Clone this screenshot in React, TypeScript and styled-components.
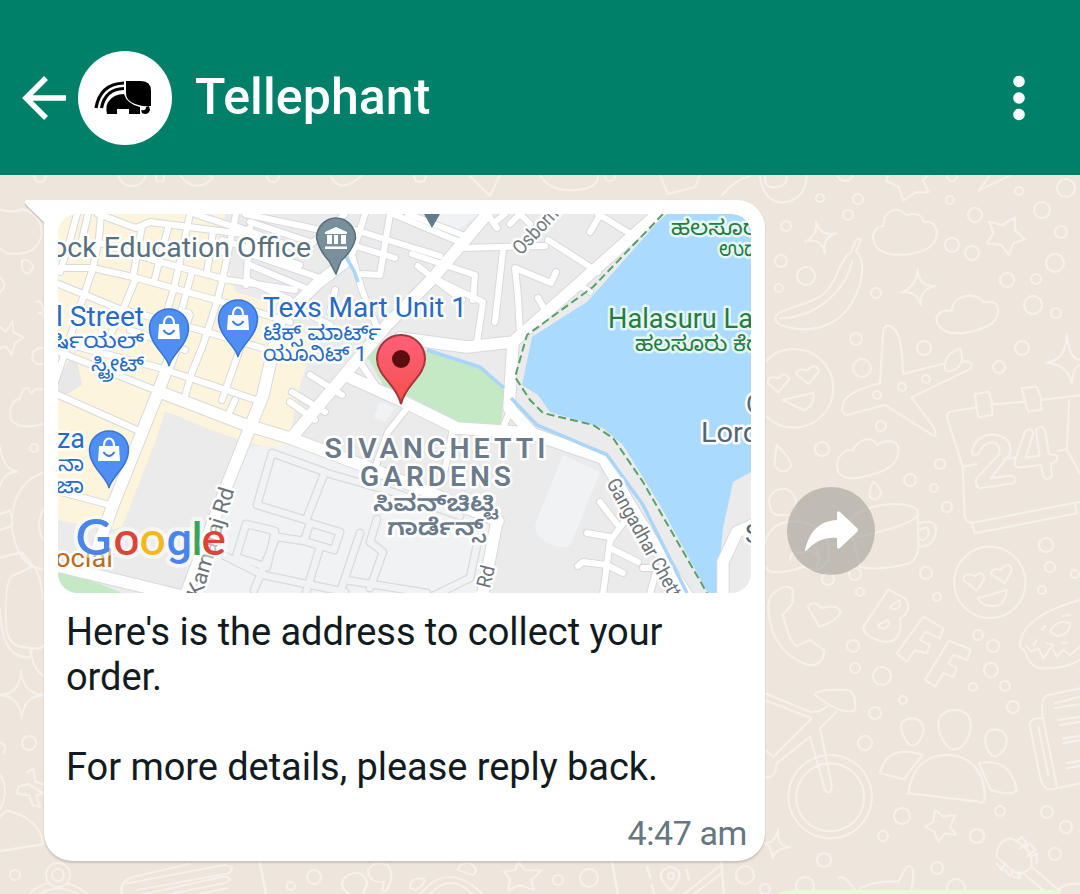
import React from 'react';
import styled, { createGlobalStyle } from 'styled-components';

const Global = createGlobalStyle`
  * { box-sizing: border-box; }
  body { margin: 0; background: #eee6dd; font-family: Roboto, "Noto Sans", sans-serif; overflow: hidden; }
`;

const Screen = styled.div`
  width: 1080px; height: 894px; display: flex; flex-direction: column; overflow: hidden;
`;
const Header = styled.header`
  flex: none; height: 175px; padding: 21px 41px 0 22px; background: #018069; color: #fff;
  display: flex; align-items: center;
`;
const Avatar = styled.div`
  width: 94px; height: 94px; margin-left: 12px; padding-right: 5px; border-radius: 50%; background: #fff;
  display: flex; align-items: center; justify-content: center;
`;
const Title = styled.h1`
  margin: 0 0 3px 23px; flex: 1; font-size: 50px; font-weight: 500; line-height: 60px; letter-spacing: 0.1px;
`;
const MenuButton = styled.button`
  border: 0; padding: 0; width: 44px; height: 50px; margin-right: -2px; background: none; color: #fff;
  display: flex; align-items: center; justify-content: center;
`;
const Chat = styled.main`
  flex: 1; position: relative; display: flex; flex-direction: column; justify-content: space-between;
  padding: 25px 0 0 44px;
`;
const Wallpaper = styled.svg`
  position: absolute; left: 0; top: 0; fill: none; stroke: #f6f1eb; stroke-linejoin: round; stroke-linecap: round;
`;
const MessageRow = styled.div`
  position: relative; display: flex; align-items: center; gap: 22px;
`;
const Bubble = styled.article`
  position: relative; width: 721px; height: 661px; padding: 14px; border-radius: 0 28px 28px 28px;
  background: #fff; box-shadow: 0 1.5px 2px rgba(60, 50, 40, .2); display: flex; flex-direction: column;
`;
const Tail = styled.svg`
  position: absolute; left: -20px; top: 0;
`;
const MapView = styled.svg`
  flex: none; border-radius: 20px; display: block;
`;
const Message = styled.p`
  margin: 17px 0 0 8px; font-size: 38px; line-height: 45px; color: #111b21; white-space: pre-line; letter-spacing: -0.05px;
`;
const Time = styled.time`
  align-self: flex-end; margin: 23px 4px 0 0; font-size: 34px; line-height: 40px; color: #667781; letter-spacing: -.4px;
`;
const Forward = styled.button`
  border: 0; padding: 0; width: 88px; height: 88px; border-radius: 50%; background: rgba(150, 150, 142, .52);
  display: flex; align-items: center; justify-content: center;
`;
const NextBubble = styled.div`
  position: relative; width: 280px; height: 4px; margin-left: 735px; border-radius: 18px 8px 0 0 / 4px 4px 0 0; background: #e4fdd5;
`;

const minor = [
  'M77 214L70 240L60 272', 'M88 214L82 240', 'M101 214L99 238L93 268L83 298L66 350L54 385',
  'M136 278L122 312L105 345', 'M142 226L133 277', 'M190 214L182 252L174 288L165 318', 'M192 272L183 305L170 345', 'M168 228L155 278',
  'M236 214L223 277L217 302L203 345L192 372L183 403', 'M213 232L207 272', 'M250 228L246 285', 'M243 340L222 400', 'M235 400L226 420',
  'M98 214L136 228L150 222L243 234', 'M195 214L243 230', 'M235 226L300 250', 'M222 240L300 265',
  'M54 268L93 268L133 277L223 302L290 322', 'M100 243L160 262L228 280L295 290', 'M176 245L222 252',
  'M54 282L117 308L200 330L262 348', 'M54 340L90 350L160 368L262 402', 'M130 330L185 350', 'M54 393L137 430', 'M54 350L160 392', 'M54 490L110 505',
  'M252 235L300 248', 'M253 255L320 278', 'M250 265L305 288', 'M248 280L290 300', 'M245 214L330 232', 'M250 222L310 242',
  'M345 214L310 245', 'M365 214L352 255L362 290L378 330', 'M390 214L380 275L362 274', 'M352 245L395 258', 'M355 230L440 256', 'M393 214L460 242',
  'M408 214L470 238', 'M412 254L475 275L473 300', 'M418 266L433 278L483 302L477 342', 'M433 278L462 300', 'M503 250L495 322', 'M460 248L545 246',
  'M495 222L505 214', 'M487 214L497 228', 'M510 224L520 214L530 224', 'M548 240L598 272', 'M598 214L634 236', 'M590 232L600 215', 'M576 283L590 292',
  'M556 272L551 283L515 268L518 296L520 335', 'M538 298L548 315', 'M310 375L342 395', 'M292 392L325 412', 'M290 402L315 420', 'M362 365L382 395',
  'M335 290L330 312', 'M300 310L330 325', 'M407 408L388 432L376 465', 'M453 428L444 474', 'M503 428L512 406',
  'M600 502L617 524', 'M587 533L610 537', 'M624 522L610 541L603 594', 'M610 548L638 562', 'M578 566L583 562L607 565L623 573', 'M643 568L657 568L650 594',
];
const major = [
  'M487 214L433 278L387 325L347 372L293 436', 'M345 262L318 283L280 320L263 395L227 485L185 597', 'M187 315L173 352L157 395L137 445L113 505L93 560',
  'M160 392L243 424L290 438L380 472L498 521', 'M400 338L467 347L513 342L662 210', 'M513 342L509 408L532 433',
  'M347 376L400 400L457 428L530 433L603 458L630 505L667 565L690 600', 'M497 521L482 598', 'M54 565L190 598', 'M755 524L737 532L723 562L723 600',
];
const inner = [
  'M272 453L325 472L306 520L257 505Z', 'M323 472L393 492L460 516', 'M310 523L340 532L334 550L304 541Z', 'M246 524L275 531L267 567L236 557Z',
  'M277 537L305 541', 'M225 556L263 575L345 592', 'M320 547L305 596', 'M360 533L339 596', 'M377 519L370 542L383 552L370 588', 'M345 580L427 593',
  'M477 545L470 578L433 596', 'M254 590L275 540',
];
type RoadsProps = { list: string[]; w: number; c: string };
const Roads = ({ list, w, c }: RoadsProps) => (
  <g fill="none" stroke={c} strokeWidth={w} strokeLinejoin="round" strokeLinecap="round">
    {list.map((d) => <path key={d} d={d} />)}
  </g>
);
const ShopPin = ({ x, y }: { x: number; y: number }) => (
  <g transform={`translate(${x} ${y})`}>
    <path d="M0 38C-2 27-19.5 17-19.5 0A19.5 19 0 0 1 19.5 0C19.5 17 2 27 0 38Z" fill="#4f8ef2" stroke="#3775d3" strokeWidth="1.5" />
    <path d="M-10-4H10L11 11H-11Z" fill="#fff" />
    <path d="M-5-3V-5A5 6.5 0 0 1 5-5V-3" fill="none" stroke="#fff" strokeWidth="2.2" />
    <path d="M-5.5 2Q0 10 5.5 2" fill="none" stroke="#3c7be0" strokeWidth="2" />
  </g>
);
type LabelProps = { x: number; y: number; size: number; w?: number; c: string; weight?: number; t?: string; halo?: string; spacing?: number; children: string };
const Label = ({ x, y, size, w, c, weight = 400, t, halo = '#fff', spacing, children }: LabelProps) => (
  <text x={x} y={y} fontSize={size} textLength={w} lengthAdjust="spacingAndGlyphs" letterSpacing={spacing} fill={c} fontWeight={weight} transform={t}
    stroke={halo} strokeWidth="5" strokeLinejoin="round" paintOrder="stroke">{children}</text>
);

const CityMap = () => (
  <MapView width="693" height="379" viewBox="58 214 693 379" fontFamily='Roboto, "Noto Sans Kannada", "Noto Sans", sans-serif'>
    <rect x="58" y="214" width="693" height="379" fill="#ebebeb" />
    <path d="M58 214H225L222 250L236 292L262 300L315 340L300 385L287 450L262 446L240 440L210 430L165 412L128 525L110 530L58 520Z" fill="#fdf4dc" />
    <path d="M58 380L75 350L82 385L58 400Z" fill="#e8e8e8" />
    <path d="M167 412L236 440L187 593H118L113 550Z" fill="#ebebeb" />
    <path d="M245 447L290 445L498 523L484 593H195Z" fill="#f0f2f4" />
    <path d="M563 455L600 472L572 542Q568 550 556 546Q535 540 535 525Z" fill="#f0f2f4" />
    <path d="M380 402L395 408L385 422L374 417Z" fill="#f0f2f4" />
    <path d="M430 214H480L450 236Z" fill="#f0f2f4" />
    <path d="M372 342L366 355L385 388L410 397L457 424L501 424L505 387L480 368L425 350Z" fill="#c5e8c5" />
    <path d="M58 570L100 584L122 593H58Z" fill="#c5e8c5" />
    <path d="M665 214L587 302L563 317L532 337L522 385L538 395L550 412L603 428L623 445L660 505L708 593H717L723 528L733 482L751 472V214Z" fill="#abdaff" />
    <Roads list={inner} w={9} c="#d8dade" /><Roads list={inner} w={6.5} c="#f0f2f4" />
    <Roads list={minor} w={8} c="#d7d9df" /><Roads list={major} w={13.5} c="#d7d9df" />
    <Roads list={minor} w={6} c="#fff" /><Roads list={major} w={11.5} c="#fff" />
    <g fill="none">
      <path d="M427 350L480 367L504 388M346 257L354 271L358 282M511 398L537 425L607 455L643 505L687 593" stroke="#a9d5fa" strokeWidth="3.5" />
      <path d="M663 214L593 287L527 335L515 377L530 400L543 413L593 425L613 438L643 482L707 593" stroke="#57a269" strokeWidth="2" strokeDasharray="8 4" />
    </g>
    <Label x={51} y={257} size={27} w={260} c="#58717f">ock Education Office</Label>
    <Label x={263} y={317} size={27} w={204} c="#276bc6">Texs Mart Unit 1</Label>
    <Label x={263} y={340} size={21} w={118} c="#276bc6">ಟೆಕ್ಸ್ ಮಾರ್ಟ್</Label>
    <Label x={263} y={361} size={21} w={104} c="#276bc6">ಯೂನಿಟ್ 1</Label>
    <Label x={56} y={326} size={27} w={88} c="#276bc6">l Street</Label>
    <Label x={49} y={348} size={21} w={95} c="#276bc6">ರ್ಷಿಯಲ್</Label>
    <Label x={91} y={371} size={21} w={53} c="#276bc6">ಸ್ಟ್ರೀಟ್</Label>
    <Label x={57} y={448} size={27} w={28} c="#276bc6">za</Label>
    <Label x={58} y={471} size={21} w={26} c="#276bc6">ನಾ</Label>
    <Label x={56} y={493} size={21} w={28} c="#276bc6">ಜಾ</Label>
    <Label x={671} y={235} size={21} w={96} c="#277b40" halo="#e4f7f5">ಹಲಸೂರು</Label>
    <Label x={719} y={256} size={21} w={70} c="#277b40" halo="#e4f7f5">ಉದ್ಯಾನ</Label>
    <Label x={608} y={328} size={28} w={173} c="#277b40" halo="#e4f7f5">Halasuru Lake</Label>
    <Label x={635} y={351} size={21} w={126} c="#277b40" halo="#e4f7f5">ಹಲಸೂರು ಕೆರೆ</Label>
    <Label x={701} y={442} size={27} w={58} c="#526773">Lord</Label>
    <Label x={746} y={413} size={26} c="#526773">O</Label>
    <Label x={745} y={543} size={26} c="#526773">S</Label>
    <Label x={324.500} y={458} size={28} w={225} c="#6a7b8c" weight={600} spacing={4}>SIVANCHETTI</Label>
    <Label x={360} y={486} size={28} w={155} c="#6a7b8c" weight={600} spacing={4}>GARDENS</Label>
    <Label x={373} y={511} size={23} w={125} c="#6a7b8c" weight={600}>ಸಿವನ್‌ಚಿಟ್ಟಿ</Label>
    <Label x={387} y={535} size={23} w={98} c="#6a7b8c" weight={600}>ಗಾರ್ಡೆನ್ಸ್</Label>
    <Label x={0} y={0} size={20} w={66} c="#74797e" t="translate(521 256) rotate(-47)">Osborne</Label>
    <Label x={0} y={0} size={22} w={114} c="#6b737a" t="translate(201 599) rotate(-73)">Kamaraj Rd</Label>
    <Label x={0} y={0} size={20} w={42} c="#6b737a" t="translate(485 608) rotate(-76)">ja Rd</Label>
    <Label x={0} y={0} size={20} w={141} c="#6b737a" t="translate(606 483) rotate(61)">Gangadhar Chetty</Label>
    <Label x={55} y={567} size={26} w={58} c="#b96b20">ocial</Label>
    <path d="M329 261Q319 250 316.500 238A19.500 20 0 1 1 355.500 238Q353 250 341 261L336 274Z" fill="#78909c" stroke="#58717d" strokeWidth="1.5" />
    <path d="M336 227L325 232V234H347V232ZM327 235H332V244H327ZM334 235H338V244H334ZM341 235H346V244H341ZM325 246.500H347V249H325Z" fill="#fff" />
    <path d="M424 214H440L432 228Z" fill="#607d8b" />
    <ShopPin x={169} y={328} /><ShopPin x={238} y={319} /><ShopPin x={109} y={450} />
    <defs><linearGradient id="pin" x1="0" y1="0" x2="0" y2="1"><stop stopColor="#ff6079" /><stop offset="1" stopColor="#f5504c" /></linearGradient></defs>
    <path d="M401 404C397 385 377 376 377 359A24 24 0 0 1 425 359C425 376 405 385 401 404Z" fill="url(#pin)" stroke="#a9343a" strokeWidth="2" />
    <circle cx="401" cy="359" r="9" fill="#5b0d10" />
    <text y="555" fontSize="46" fontWeight="600" fontFamily="Lato, sans-serif" stroke="#fff" strokeOpacity=".55" strokeWidth="8" strokeLinejoin="round" paintOrder="stroke">
      <tspan x="75.5" fontSize="50" fill="#4a86e8">G</tspan><tspan x="113.5" fill="#db4437">o</tspan><tspan x="139.5" fill="#f4b91e">o</tspan>
      <tspan x="166.5" fontSize="45" fontWeight="500" fontFamily="Roboto, sans-serif" fill="#4a86e8">g</tspan><tspan x="191.5" fill="#3da457">l</tspan><tspan x="201.5" fill="#db4437">e</tspan>
    </text>
  </MapView>
);

/* Doodle bubbles: [centre x, centre y, radius] */
const dots = [
  [820, 198, 4], [858, 199, 5], [848, 215, 5], [786, 226, 5], [781, 261, 6], [806, 276, 9], [779, 288, 4], [876, 293, 5], [950, 200, 4], [975, 215, 7],
  [1019, 191, 4], [1066, 188, 9], [1042, 210, 8], [1061, 232, 6], [952, 245, 7], [972, 253, 7], [1055, 263, 9], [1007, 280, 7], [1036, 279, 5], [1033, 305, 9],
  [1056, 313, 5], [856, 339, 6], [862, 368, 9], [924, 348, 7], [1022, 348, 7], [999, 367, 6], [877, 395, 4], [902, 387, 4], [926, 379, 4], [881, 426, 5],
  [822, 449, 7], [940, 464, 5], [910, 480, 6], [934, 488, 4], [947, 507, 5], [1046, 545, 7], [1050, 567, 5], [1042, 590, 4], [1075, 574, 4], [926, 573, 6],
  [855, 574, 6], [828, 579, 6], [860, 592, 4], [937, 597, 4], [978, 635, 5], [993, 646, 6], [853, 646, 6], [855, 668, 5], [882, 676, 9], [991, 670, 7],
  [973, 687, 4], [1005, 686, 5], [1013, 707, 6], [903, 700, 4], [875, 713, 6], [865, 743, 7], [902, 816, 8], [883, 836, 5], [977, 836, 7], [1000, 811, 5],
  [1047, 812, 6], [1066, 827, 6], [1055, 854, 6], [824, 860, 7], [937, 868, 6], [805, 886, 9], [956, 888, 9], [765, 889, 5], [845, 173, 8], [952, 176, 5],
  [40, 176, 6], [34, 448, 4], [29, 743, 7], [15, 875, 5], [58, 875, 6], [58, 875, 12], [291, 886, 4], [314, 877, 7], [558, 880, 5], [589, 878, 9],
  [745, 875, 9], [671, 876, 3],
  [132, 172, 14], [160, 178, 4], [273, 176, 6], [420, 176, 6], [610, 176, 5],
];
const doodlesRight = [
  'M0 20Q10 95 68 98Q138 90 140 16M15 16Q10 55 50 52Q85 45 80 16', 'M384 16L378 33L415 50L430 92L465 68L506 66L488 30L505 16', 'M690 16L656 62L750 16',
  'M345 225C330 195 345 170 370 168C370 120 415 105 440 136C465 125 490 135 490 156C530 150 540 190 520 220C490 260 370 270 345 225Z',
  'M168 155Q180 200 228 190Q185 205 195 248Q180 200 135 215Q175 195 168 155Z',
  'M290 207L270 250C240 260 230 350 180 380C130 410 80 410 50 435Q40 450 60 465C170 500 250 460 290 370C315 310 310 260 288 245L303 208ZM276 275C260 350 200 400 150 425Q100 445 60 445',
  'M688 155L728 165L764 142L766 182L795 207L760 220L746 255L724 225L681 220L700 190Z',
  'M473 298Q475 350 527 348Q480 355 482 405Q470 360 423 368Q470 350 473 298Z',
  'M535 465C520 440 535 420 575 422C580 370 650 365 672 397C720 385 725 430 700 455C670 485 560 510 535 465Z',
  'M15 575A118 118 0 1 1 20 740M55 667L24 640Q20 615 55 625Q75 600 88 628ZM145 642L108 612Q115 592 140 602Q170 575 177 605ZM68 690L160 668Q165 710 130 720Z',
  'M360 640L370 480Q380 455 400 475C430 500 425 580 430 612L555 580Q560 550 600 535Q610 560 604 575Q640 570 634 595L455 682L520 770Q535 810 515 793L375 705L260 735Q240 730 250 700Q260 665 360 640ZM555 580Q550 610 575 603Q600 595 604 575',
  'M920 495Q930 570 960 570M920 495Q920 570 857 578Q920 580 935 640Q940 590 960 585',
  'M965 675Q925 680 910 682L845 690L830 650L785 655L795 695L700 703L685 665L645 672L650 712L570 725Q555 735 565 755L608 890L614 1040Q620 1060 640 1058L960 995M608 890L650 882M730 868L765 863M895 842L920 838L928 690M920 838L960 910M635 1060L645 1090L950 1030L945 1000M650 712L655 742L697 735L695 700M795 695L805 725L845 718L842 690',
  'M636 845Q645 795 700 793Q765 805 748 855L692 925L755 917Q775 928 760 940L660 955Q642 948 650 925L718 852Q722 818 695 818Q670 818 657 848Q640 865 636 845ZM765 872L795 785Q815 768 820 790L797 863L838 857L828 780Q845 760 855 782L867 852L888 856Q900 870 872 882L876 918Q862 935 850 920L843 885L775 893Q762 890 765 872Z',
  'M50 825Q100 875 93 890Q65 920 43 885Z', 'M235 905C220 870 250 835 278 842C300 800 340 800 350 825C390 800 420 820 415 845C415 890 360 910 310 920Q250 935 235 905Z',
  'M340 935Q325 965 330 980Q350 1000 363 970Q360 950 340 935ZM270 1070C260 1000 470 980 475 1030Q475 1060 300 1100Q265 1090 270 1070L300 1190Q350 1205 450 1180Q475 1160 475 1130L473 1020M475 1060Q530 1045 528 1080Q525 1130 478 1130M480 1080Q510 1060 505 1095Q490 1120 480 1105',
  'M30 1010A40 40 0 1 1 105 1010Q100 1040 70 1035Q35 1040 30 1010M15 1120Q30 1060 90 1055Q170 1050 200 1110Q220 1150 195 1185Q170 1210 130 1190Q80 1210 30 1205L15 1190M90 1170Q90 1140 125 1150Q160 1130 175 1160M170 1190Q190 1150 155 1125',
  'M690 1130A107 107 0 1 1 689 1130M650 1262L610 1230Q610 1205 645 1218Q670 1195 672 1230ZM735 1240L692 1210Q700 1190 720 1200Q750 1170 755 1200ZM653 1285L740 1260Q735 1310 700 1308Q670 1310 653 1285Z',
  'M40 1270Q80 1235 98 1260V1300L68 1335Q90 1420 110 1428L150 1410L192 1440Q190 1490 145 1485Q70 1460 40 1390Q10 1300 40 1270M178 1370L144 1312Q160 1285 185 1315Q230 1300 242 1325Q235 1350 178 1370Z',
  'M385 1258L310 1370Q310 1400 370 1415Q430 1420 420 1345Q460 1320 435 1285ZM390 1310A14 14 0 1 0 418 1290ZM353 1365A17 17 0 1 0 385 1350ZM490 1340L410 1450L440 1475L465 1440L500 1450L510 1425L480 1410L495 1385L540 1405L550 1375ZM567 1412L495 1530L525 1550L550 1510L580 1520L590 1495L565 1480L580 1455L622 1470L632 1438Z',
  'M960 1290Q780 1340 780 1430Q800 1445 800 1460Q820 1500 860 1495Q920 1495 960 1470M870 1385Q890 1345 930 1360Q930 1395 890 1398ZM800 1430L815 1445L835 1435L850 1465L875 1430L890 1460L910 1440L930 1455L960 1430M845 1380L855 1368M820 1425L830 1410M860 1420L880 1425M905 1420L920 1418M930 1335L910 1338',
  'M15 1570L150 1625Q175 1630 200 1610M15 1590L155 1645L40 1760L15 1740M150 1700L195 1860Q215 1880 215 1845L180 1675L230 1625M165 1575Q170 1555 260 1560Q290 1565 285 1620Q250 1640 165 1575ZM150 1700L50 1780Q45 1830 15 1820M210 1755A125 125 0 1 0 211 1755M210 1780A102 102 0 1 0 211 1780',
  'M455 1645C490 1645 500 1680 480 1710Q460 1740 440 1715Q400 1650 455 1645ZM585 1620C640 1620 645 1680 610 1725Q580 1755 555 1720C515 1660 540 1620 585 1620ZM705 1678C750 1680 750 1730 715 1755Q700 1770 680 1735Q665 1680 705 1678M445 1870C455 1790 500 1755 560 1755C640 1755 680 1820 673 1890Q670 1905 655 1895ZM360 1810Q380 1720 488 1755Q450 1800 433 1828ZM657 1780Q750 1760 770 1860Q760 1880 692 1860Z',
  'M960 1555L865 1575Q840 1580 848 1640L890 1845Q890 1860 870 1858Q850 1860 840 1820L810 1670Q805 1640 850 1645M835 1670L865 1815M890 1855L960 1840M885 1600L960 1580M885 1615L960 1602M895 1650L960 1640M900 1665L960 1655M910 1705L960 1698M910 1720L960 1710M920 1780L960 1772M920 1795L960 1788',
  'M525 1920L550 1940L587 1935L570 1970L588 1995L555 1990L535 2015L523 1985L495 1970L520 1955Z', 'M55 1978Q50 2030 90 2032Q45 2035 38 2065Q35 2030 15 2020Q45 2020 55 1978',
  'M235 2125Q250 2110 285 2160M300 2155Q350 2130 415 2135L440 2090Q470 2080 455 2155M710 2060Q710 2015 750 2005Q820 2030 815 2090Q790 2120 760 2105ZM770 2015L785 2000L800 2020L780 2035M795 2035L810 2020L825 2040L800 2060M815 2060L830 2050L830 2080M710 2080L725 2100L735 2080M735 2100L750 2120L760 2100M760 2120L780 2125L775 2105M815 2090L900 2165M795 2115L850 2160M895 2160Q910 2140 960 2140',
];
const doodlesLeft = [
  'M0 85Q30 95 70 85Q125 95 125 140Q110 190 20 180L0 170M65 197Q90 190 100 210Q85 235 67 215ZM0 232Q25 250 0 265M108 285Q125 280 130 305M115 310Q130 305 132 322M130 385Q95 385 97 410Q110 425 130 420',
  'M0 340L18 350L38 327L40 352L70 362L45 375L35 400L18 382L0 385', 'M130 475Q100 470 95 485Q75 455 60 495Q25 500 32 540Q60 565 130 550',
  'M0 600Q10 650 52 653Q10 655 0 685M130 655Q35 680 35 770Q50 860 130 865M130 735Q105 770 130 800M0 745L30 738L38 770L0 780M0 840L65 828L100 858L35 880Q10 900 20 1000Q30 1035 90 1035L93 1055Q20 1060 5 990L0 950M95 1055V1035Q125 1040 130 1030M95 1055Q105 1085 130 1095M100 858Q125 880 128 930',
  'M63 1085Q70 1135 130 1137Q70 1140 65 1188Q60 1140 0 1137Q60 1135 63 1085Z', 'M80 1305L100 1297L105 1325L130 1330M130 1350L108 1355L120 1380L97 1375L88 1355L50 1350L55 1335L85 1330ZM0 1310Q30 1345 0 1385M0 1400L20 1387Q120 1405 130 1460L0 1475',
  'M0 1240Q25 1245 10 1265',
];
const doodlesBottom = [
  'M60 162Q80 130 100 130M135 130Q160 140 175 162M80 162Q115 130 158 162', 'M245 162Q240 120 270 110L380 72M255 130L450 75Q475 80 460 100L275 150M290 162L450 110Q475 115 450 130L340 162M400 162L455 145',
  'M522 65L535 162', 'M700 160Q675 130 700 105Q730 85 738 130L730 162M772 125Q740 130 740 90Q750 60 780 75Q795 110 775 155L768 150Z',
  'M825 145Q820 115 850 115Q860 130 835 150ZM845 162Q900 60 970 162M865 162Q905 95 950 162M920 90Q925 65 945 70Q965 90 950 105Z',
  'M1042 65L1055 90L1088 92L1068 120L1073 150L1045 135L1022 150L1025 118L1013 95L1035 90Z',
  'M1230 65L1242 162M1450 65L1455 162M1348 150Q1310 100 1345 80Q1385 90 1348 150ZM1300 80L1308 115M1310 135L1315 160M1375 162L1445 80M1395 162L1450 100M1380 90L1385 120',
];
const doodlesTop = ['M180 175Q195 195 213 178L208 175', 'M330 175Q340 196 362 175', 'M470 176L490 196L500 175', 'M540 175Q550 192 575 190Q600 188 598 175', 'M660 175L668 194L695 187L700 175', 'M722 195Q735 180 750 176'];

const App = () => (
  <Screen>
    <Global />
    <Header>
      <svg width="44" height="44" viewBox="0 0 44 44" fill="none" stroke="#fff" strokeWidth="5.5"><path d="M44 22H5M24 2L4 22L24 42" /></svg>
      <Avatar>
        <svg width="58" height="36" viewBox="0 0 58 36">
          <path d="M32 1H47Q57 1 57 11V26Q45 27 37 22Q32 19 32 13Z" fill="#000" />
          <path d="M30 14Q20 14 15 21Q11 25 13 34H23V29H35V34H46V27Q33 24 30 14Z" fill="#000" />
          <path d="M2 28Q6 4 30 3M7.500 28Q11 9 30 8.500" fill="none" stroke="#000" strokeWidth="3.200" />
          <path d="M55 26L56 30Q54 36 48 33L47 30Q52 31 52 27Z" fill="#000" />
        </svg>
      </Avatar>
      <Title>Tellephant</Title>
      <MenuButton aria-label="Menu">
        <svg width="12" height="46" viewBox="0 0 12 46" fill="#fff"><circle cx="6" cy="6.5" r="5.8" /><circle cx="6" cy="23" r="5.8" /><circle cx="6" cy="39.5" r="5.8" /></svg>
      </MenuButton>
    </Header>
    <Chat>
      <Wallpaper width="1080" height="719" viewBox="0 175 1080 719">
        <g strokeWidth="2.1">{dots.map(([x, y, r], i) => <circle key={i} cx={x} cy={y} r={r} />)}</g>
        <g transform="translate(760 170) scale(.33333)" strokeWidth="6.3">{doodlesRight.map((d) => <path key={d} d={d} />)}</g>
        <g transform="translate(0 170) scale(.33333 .4617)" strokeWidth="5.2">{doodlesLeft.map((d) => <path key={d} d={d} />)}</g>
        <g transform="translate(0 840) scale(.4975 .33333)" strokeWidth="5.2">{doodlesBottom.map((d) => <path key={d} d={d} />)}</g>
        <g strokeWidth="2.1">{doodlesTop.map((d) => <path key={d} d={d} />)}</g>
      </Wallpaper>
      <MessageRow>
        <Bubble>
          <Tail width="24" height="26" viewBox="0 0 24 26">
            <path d="M1 4Q4 8 20 23" fill="none" stroke="#cfc7be" strokeWidth="1.5" />
            <path d="M24 0H4Q-1 0 2 4Q4 7 20 22H24Z" fill="#fff" />
          </Tail>
          <CityMap />
          <Message>{"Here's is the address to collect your\norder.\n\nFor more details, please reply back."}</Message>
          <Time>4:47 am</Time>
        </Bubble>
        <Forward aria-label="Forward">
          <svg width="56" height="42" viewBox="0 0 56 42"><path d="M2 40C7 20 17 11 34 10V3Q34 0 37 2L54 18Q56 20 54 22L37 38Q34 40 34 36V28Q17 26 4 40Q2 42 2 40Z" fill="#fff" /></svg>
        </Forward>
      </MessageRow>
      <NextBubble />
    </Chat>
  </Screen>
);

export default App;
